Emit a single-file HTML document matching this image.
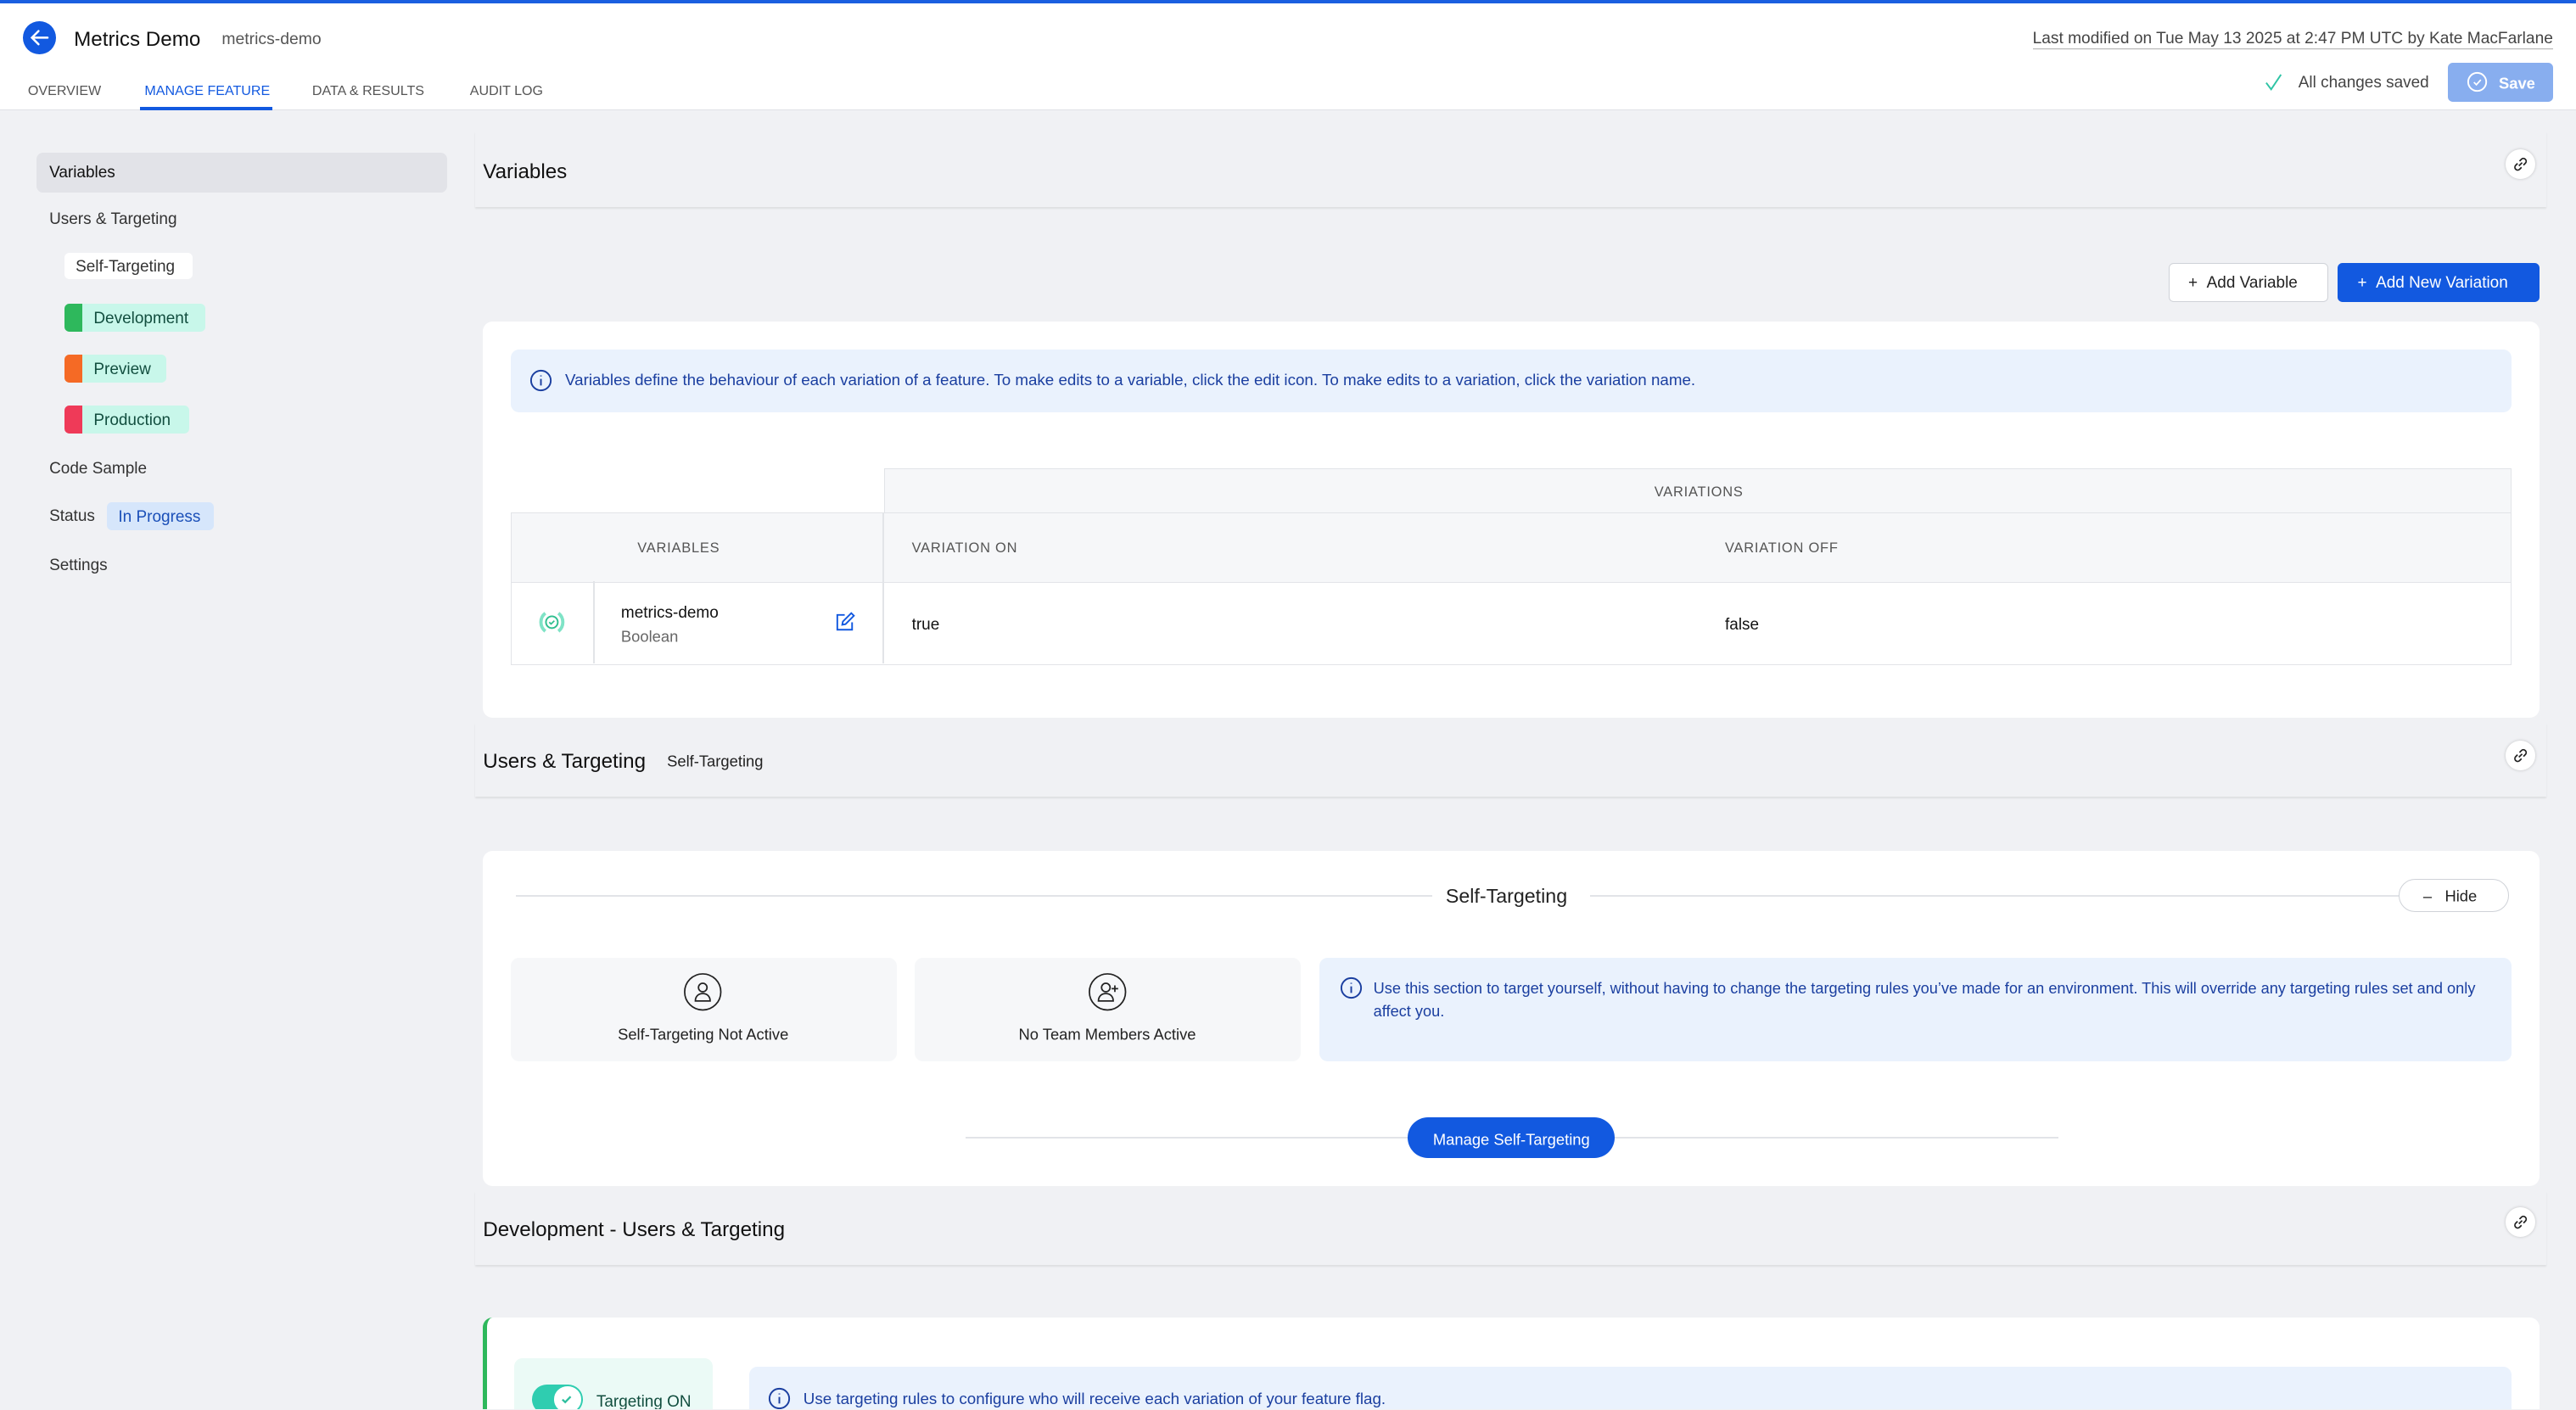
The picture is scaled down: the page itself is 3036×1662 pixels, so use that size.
<!DOCTYPE html>
<html><head><meta charset="utf-8"><style>
*{box-sizing:border-box;margin:0;padding:0}
html,body{width:3036px;height:1662px;overflow:hidden;background:#f0f1f4}
#r{zoom:1.93622;width:1568px;height:858px;position:relative;font-family:"Liberation Sans",Arial,sans-serif;color:#1f2430;overflow:hidden}
.a{position:absolute;white-space:nowrap}
.t{line-height:1;transform:translateY(-42%)}
.ico{position:absolute;width:18px;height:18px;border-radius:50%;background:#fff;box-shadow:0 0 2px rgba(0,0,0,.2)}
</style></head><body><div id="r">
<!-- header -->
<div class="a" style="left:0;top:0;width:1568px;height:67px;background:#fff;border-bottom:1px solid #dfe1e6"></div>
<div class="a" style="left:0;top:0;width:1568px;height:2px;background:#1a5fe0"></div>
<div class="a" style="left:14px;top:13px;width:20px;height:20px;border-radius:50%;background:#1259e0"></div>
<svg class="a" style="left:14px;top:13px" width="20" height="20" viewBox="0 0 20 20"><path d="M15 10H5.5M9.5 6L5.5 10l4 4" stroke="#fff" stroke-width="1.3" fill="none" stroke-linecap="round"/></svg>
<div class="a t" style="left:45px;top:23px;font-size:12.5px;font-weight:500;color:#111">Metrics Demo</div>
<div class="a t" style="left:135px;top:23px;font-size:10px;color:#555">metrics-demo</div>
<div class="a t" style="left:17px;top:55px;font-size:8.3px;color:#555">OVERVIEW</div>
<div class="a t" style="left:88px;top:55px;font-size:8.3px;color:#1259e0">MANAGE FEATURE</div>
<div class="a" style="left:85px;top:65px;width:81px;height:2px;background:#1259e0"></div>
<div class="a t" style="left:190px;top:55px;font-size:8.3px;color:#555">DATA &amp; RESULTS</div>
<div class="a t" style="left:286px;top:55px;font-size:8.3px;color:#555">AUDIT LOG</div>
<div class="a t" style="right:14px;top:23px;font-size:9.9px;color:#444;border-bottom:1px solid #aaa;padding-bottom:1px;transform:translateY(-40%)">Last modified on Tue May 13 2025 at 2:47 PM UTC by Kate MacFarlane</div>
<svg class="a" style="left:1378px;top:44px" width="12" height="12" viewBox="0 0 12 12"><path d="M1.5 6.5L4.5 10.5 10.5 1.5" stroke="#2fc4a5" stroke-width="1" fill="none"/></svg>
<div class="a t" style="left:1399px;top:50px;font-size:9.8px;color:#444">All changes saved</div>
<div class="a" style="left:1490px;top:38px;width:64px;height:24px;background:#88aeef;border-radius:3px"></div>
<svg class="a" style="left:1501px;top:43px" width="14" height="14" viewBox="0 0 14 14"><circle cx="7" cy="7" r="5.5" stroke="#fff" fill="none"/><path d="M5 7.2l1.5 1.5 2.7-3" stroke="#fff" fill="none" stroke-width=".9"/></svg>
<div class="a t" style="left:1521px;top:50px;font-size:9.5px;color:#fff;font-weight:bold">Save</div>

<!-- sidebar -->
<div class="a" style="left:22px;top:93px;width:250px;height:24px;background:#e2e3e8;border-radius:4px"></div>
<div class="a t" style="left:30px;top:105px;font-size:9.8px;color:#111">Variables</div>
<div class="a t" style="left:30px;top:133px;font-size:9.8px;color:#333">Users &amp; Targeting</div>
<div class="a" style="left:39px;top:154px;width:78px;height:16px;background:#fff;border-radius:3px"></div>
<div class="a t" style="left:46px;top:162px;font-size:9.8px;color:#333">Self-Targeting</div>
<div class="a" style="left:39px;top:185px;width:86px;height:17px;background:#c8f7ea;border-radius:3px;overflow:hidden"><div style="width:11px;height:100%;background:#2eb85c"></div></div>
<div class="a t" style="left:57px;top:193.5px;font-size:9.8px;color:#124e3f">Development</div>
<div class="a" style="left:39px;top:216px;width:62px;height:17px;background:#c8f7ea;border-radius:3px;overflow:hidden"><div style="width:11px;height:100%;background:#f56a25"></div></div>
<div class="a t" style="left:57px;top:224.5px;font-size:9.8px;color:#124e3f">Preview</div>
<div class="a" style="left:39px;top:247px;width:76px;height:17px;background:#c8f7ea;border-radius:3px;overflow:hidden"><div style="width:11px;height:100%;background:#ef3a58"></div></div>
<div class="a t" style="left:57px;top:255.5px;font-size:9.8px;color:#124e3f">Production</div>
<div class="a t" style="left:30px;top:285px;font-size:9.8px;color:#333">Code Sample</div>
<div class="a t" style="left:30px;top:314px;font-size:9.8px;color:#333">Status</div>
<div class="a" style="left:65px;top:306px;width:65px;height:17px;background:#d6e6fb;border-radius:3px"></div>
<div class="a t" style="left:72px;top:314.5px;font-size:9.8px;color:#1a4fb8">In Progress</div>
<div class="a t" style="left:30px;top:344px;font-size:9.8px;color:#333">Settings</div>

<!-- Variables header -->
<div class="a" style="left:289px;top:80px;width:1261px;height:46px;background:#f0f1f4;box-shadow:0 1px 1px rgba(0,0,0,.08)"></div>
<div class="a t" style="left:294px;top:104px;font-size:12.5px;color:#111">Variables</div>
<div class="ico" style="left:1525px;top:91px"></div>
<svg class="a" style="left:1528px;top:94px" width="12" height="12" viewBox="0 0 12 12"><path d="M5 7l2-2M4.2 5.5L3 6.7a1.7 1.7 0 002.4 2.4l1.2-1.2M7.8 6.5L9 5.3A1.7 1.7 0 006.6 2.9L5.4 4.1" stroke="#222" stroke-width=".9" fill="none"/></svg>
<div class="a" style="left:1320px;top:160px;width:97px;height:24px;background:#fff;border:1px solid #cfd2d8;border-radius:3px"></div>
<div class="a t" style="left:1332px;top:172px;font-size:9.8px;color:#222">+&nbsp;&nbsp;Add Variable</div>
<div class="a" style="left:1423px;top:160px;width:123px;height:24px;background:#1259e0;border-radius:3px"></div>
<div class="a t" style="left:1435px;top:172px;font-size:9.8px;color:#fff">+&nbsp;&nbsp;Add New Variation</div>

<!-- variables card -->
<div class="a" style="left:294px;top:196px;width:1252px;height:241px;background:#fff;border-radius:6px"></div>
<div class="a" style="left:311px;top:213px;width:1218px;height:38px;background:#eaf2fd;border-radius:5px"></div>
<svg class="a" style="left:322px;top:224px" width="15" height="15" viewBox="0 0 15 15"><circle cx="7.5" cy="7.5" r="6" stroke="#1b3fa0" fill="none"/><path d="M7.5 6.5v4M7.5 4.4v.6" stroke="#1b3fa0"/></svg>
<div class="a t" style="left:344px;top:231px;font-size:9.7px;color:#1b3fa0">Variables define the behaviour of each variation of a feature. To make edits to a variable, click the edit icon. To make edits to a variation, click the variation name.</div>
<div class="a" style="left:538px;top:285px;width:991px;height:28px;background:#f6f7f9;border:1px solid #e2e4e8"></div>
<div class="a t" style="left:1007px;top:299px;font-size:8.5px;color:#555;letter-spacing:.4px">VARIATIONS</div>
<div class="a" style="left:311px;top:312px;width:1218px;height:43px;background:#f6f7f9;border:1px solid #e2e4e8"></div>
<div class="a" style="left:537px;top:312px;width:1px;height:92px;background:#e2e4e8"></div>
<div class="a t" style="left:388px;top:333px;font-size:8.5px;color:#555;letter-spacing:.4px">VARIABLES</div>
<div class="a t" style="left:555px;top:333px;font-size:8.5px;color:#555;letter-spacing:.4px">VARIATION ON</div>
<div class="a t" style="left:1050px;top:333px;font-size:8.5px;color:#555;letter-spacing:.4px">VARIATION OFF</div>
<div class="a" style="left:311px;top:354px;width:1218px;height:51px;border:1px solid #e2e4e8;border-top:none"></div>
<div class="a" style="left:361px;top:354px;width:1px;height:50px;background:#e2e4e8"></div>
<svg class="a" style="left:327px;top:370px" width="18" height="18" viewBox="0 0 18 18"><path d="M5 3.5A7 7 0 005 14.5M13 3.5a7 7 0 010 11" stroke="#7fe3c6" stroke-width="2" fill="none"/><circle cx="9" cy="9" r="3.6" stroke="#2fbf8f" fill="none"/><path d="M7.4 9l1.1 1.1 2-2" stroke="#2fbf8f" stroke-width=".9" fill="none"/></svg>
<div class="a t" style="left:378px;top:373px;font-size:9.8px;color:#111">metrics-demo</div>
<div class="a t" style="left:378px;top:387px;font-size:9.5px;color:#666">Boolean</div>
<svg class="a" style="left:507px;top:372px" width="14" height="14" viewBox="0 0 14 14"><path d="M7 2.5H2.5v9h9V7" stroke="#1259e0" fill="none"/><path d="M5.5 8.5l.4-2L11 1.4l1.6 1.6-5.1 5.1z" stroke="#1259e0" fill="none"/></svg>
<div class="a t" style="left:555px;top:380px;font-size:9.8px;color:#111">true</div>
<div class="a t" style="left:1050px;top:380px;font-size:9.8px;color:#111">false</div>

<!-- Users & Targeting header -->
<div class="a" style="left:289px;top:440px;width:1261px;height:45px;background:#f0f1f4;box-shadow:0 1px 1px rgba(0,0,0,.08)"></div>
<div class="a t" style="left:294px;top:463px;font-size:12.5px;color:#111">Users &amp; Targeting</div>
<div class="a t" style="left:406px;top:463px;font-size:9.5px;color:#222">Self-Targeting</div>
<div class="ico" style="left:1525px;top:451px"></div>
<svg class="a" style="left:1528px;top:454px" width="12" height="12" viewBox="0 0 12 12"><path d="M5 7l2-2M4.2 5.5L3 6.7a1.7 1.7 0 002.4 2.4l1.2-1.2M7.8 6.5L9 5.3A1.7 1.7 0 006.6 2.9L5.4 4.1" stroke="#222" stroke-width=".9" fill="none"/></svg>

<div class="a" style="left:294px;top:518px;width:1252px;height:204px;background:#fff;border-radius:6px"></div>
<div class="a" style="left:314px;top:545px;width:1146px;height:1px;background:#e2e4e8"></div>
<div class="a" style="left:872px;top:535px;width:96px;height:20px;background:#fff"></div>
<div class="a t" style="left:880px;top:545px;font-size:12px;color:#222">Self-Targeting</div>
<div class="a" style="left:1460px;top:535px;width:67px;height:20px;border:1px solid #cfd2d8;border-radius:10px;background:#fff"></div>
<div class="a t" style="left:1475px;top:545px;font-size:9.5px;color:#222">–&nbsp;&nbsp;&nbsp;Hide</div>
<div class="a" style="left:311px;top:583px;width:235px;height:63px;background:#f6f7f9;border-radius:5px"></div>
<div class="a" style="left:557px;top:583px;width:235px;height:63px;background:#f6f7f9;border-radius:5px"></div>
<svg class="a" style="left:416px;top:592px" width="24" height="24" viewBox="0 0 24 24"><circle cx="12" cy="12" r="11" stroke="#222" fill="none" stroke-width=".9"/><circle cx="12" cy="9.3" r="2.6" stroke="#222" fill="none" stroke-width=".9"/><path d="M7.5 17.5c0-3 2-4.5 4.5-4.5s4.5 1.5 4.5 4.5z" stroke="#222" fill="none" stroke-width=".9"/></svg>
<div class="a t" style="left:428px;top:629px;font-size:9.5px;color:#222;transform:translate(-50%,-42%)">Self-Targeting Not Active</div>
<svg class="a" style="left:662px;top:592px" width="24" height="24" viewBox="0 0 24 24"><circle cx="12" cy="12" r="11" stroke="#222" fill="none" stroke-width=".9"/><circle cx="11" cy="9.3" r="2.6" stroke="#222" fill="none" stroke-width=".9"/><path d="M6.5 17.5c0-3 2-4.5 4.5-4.5s4.5 1.5 4.5 4.5zM16.5 8v4M14.5 10h4" stroke="#222" fill="none" stroke-width=".9"/></svg>
<div class="a t" style="left:674px;top:629px;font-size:9.5px;color:#222;transform:translate(-50%,-42%)">No Team Members Active</div>
<div class="a" style="left:803px;top:583px;width:726px;height:63px;background:#eaf2fd;border-radius:5px"></div>
<svg class="a" style="left:815px;top:594px" width="15" height="15" viewBox="0 0 15 15"><circle cx="7.5" cy="7.5" r="6" stroke="#1b3fa0" fill="none"/><path d="M7.5 6.5v4M7.5 4.4v.6" stroke="#1b3fa0"/></svg>
<div class="a" style="left:836px;top:595px;width:680px;font-size:9.4px;line-height:14px;color:#1b3fa0;white-space:normal">Use this section to target yourself, without having to change the targeting rules you’ve made for an environment. This will override any targeting rules set and only affect you.</div>
<div class="a" style="left:588px;top:692px;width:665px;height:1px;background:#e2e4e8"></div>
<div class="a" style="left:857px;top:680px;width:126px;height:25px;background:#1259e0;border-radius:13px"></div>
<div class="a t" style="left:920px;top:693px;font-size:9.5px;color:#fff;transform:translate(-50%,-42%)">Manage Self-Targeting</div>

<!-- Development header -->
<div class="a" style="left:289px;top:725px;width:1261px;height:45px;background:#f0f1f4;box-shadow:0 1px 1px rgba(0,0,0,.08)"></div>
<div class="a t" style="left:294px;top:748px;font-size:12.5px;color:#111">Development - Users &amp; Targeting</div>
<div class="ico" style="left:1525px;top:735px"></div>
<svg class="a" style="left:1528px;top:738px" width="12" height="12" viewBox="0 0 12 12"><path d="M5 7l2-2M4.2 5.5L3 6.7a1.7 1.7 0 002.4 2.4l1.2-1.2M7.8 6.5L9 5.3A1.7 1.7 0 006.6 2.9L5.4 4.1" stroke="#222" stroke-width=".9" fill="none"/></svg>
<div class="a" style="left:294px;top:802px;width:1252px;height:80px;background:#fff;border-radius:6px;border-left:3px solid #2eb85c"></div>
<div class="a" style="left:313px;top:827px;width:121px;height:50px;background:#ebfaf6;border-radius:5px"></div>
<div class="a" style="left:324px;top:843px;width:31px;height:18px;border-radius:9px;background:#2fcdb0"></div>
<div class="a" style="left:337px;top:844px;width:17px;height:16px;border-radius:50%;background:#fff"></div>
<svg class="a" style="left:340px;top:847px" width="10" height="10" viewBox="0 0 10 10"><path d="M2.5 5l1.7 1.6L7.5 3.2" stroke="#2fbf9f" stroke-width="1.2" fill="none"/></svg>
<div class="a t" style="left:363px;top:853px;font-size:9.8px;color:#124e3f">Targeting ON</div>
<div class="a" style="left:456px;top:832px;width:1073px;height:50px;background:#eaf2fd;border-radius:5px"></div>
<svg class="a" style="left:467px;top:844px" width="15" height="15" viewBox="0 0 15 15"><circle cx="7.5" cy="7.5" r="6" stroke="#1b3fa0" fill="none"/><path d="M7.5 6.5v4M7.5 4.4v.6" stroke="#1b3fa0"/></svg>
<div class="a t" style="left:489px;top:851px;font-size:9.7px;color:#1b3fa0">Use targeting rules to configure who will receive each variation of your feature flag.</div>
</div></body></html>
